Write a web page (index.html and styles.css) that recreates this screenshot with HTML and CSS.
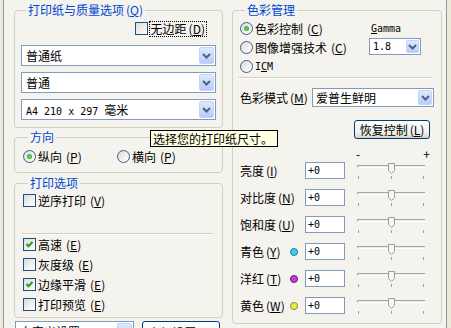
FILE: index.html
```html
<!DOCTYPE html>
<html lang="zh-CN">

<head>
    <meta charset="UTF-8">
    <meta name="viewport" content="width=device-width, initial-scale=1.0">
    <title>打印设置</title>
    <link rel="stylesheet" href="styles.css">
</head>

<body>
    <div class="tab">
        <div class="left">
            <div class="group paper">
                <div class="legend">打印纸与质量选项<span class="mn">(<u>Q</u>)</span></div>
                <div class="borderless">
                    <span class="check"><span class="box"></span><span class="focus">无边距<span class="mn">(<u>D</u>)</span></span></span>
                </div>
                <div class="combo"><span class="value">普通纸</span><span class="arrow"><svg width="9" height="6" viewBox="0 0 9 6"><path d="M1 1l3.5 3.5L8 1" fill="none" stroke="#4d6185" stroke-width="2"/></svg></span></div>
                <div class="combo"><span class="value">普通</span><span class="arrow"><svg width="9" height="6" viewBox="0 0 9 6"><path d="M1 1l3.5 3.5L8 1" fill="none" stroke="#4d6185" stroke-width="2"/></svg></span></div>
                <div class="combo"><span class="value"><span class="mono">A4 210 x 297 </span>毫米</span><span class="arrow"><svg width="9" height="6" viewBox="0 0 9 6"><path d="M1 1l3.5 3.5L8 1" fill="none" stroke="#4d6185" stroke-width="2"/></svg></span></div>
            </div>

            <div class="group orient">
                <div class="legend">方向</div>
                <div class="radios">
                    <span class="radio on portrait"><span class="dot"></span>纵向<span class="mn">(<u>P</u>)</span></span>
                    <span class="radio"><span class="dot"></span>横向<span class="mn">(<u>P</u>)</span></span>
                </div>
            </div>

            <div class="group options">
                <div class="legend">打印选项</div>
                <div class="check"><span class="box"></span>逆序打印<span class="mn">(<u>V</u>)</span></div>
                <div class="sep"></div>
                <div class="opt-list">
                    <div class="check on"><span class="box"><svg width="11" height="11" viewBox="0 0 11 11"><path d="M2.5 5l2 2.2 4-4.2" fill="none" stroke="#21a121" stroke-width="2"/></svg></span>高速<span class="mn">(<u>E</u>)</span></div>
                    <div class="check"><span class="box"></span>灰度级<span class="mn">(<u>E</u>)</span></div>
                    <div class="check on"><span class="box"><svg width="11" height="11" viewBox="0 0 11 11"><path d="M2.5 5l2 2.2 4-4.2" fill="none" stroke="#21a121" stroke-width="2"/></svg></span>边缘平滑<span class="mn">(<u>E</u>)</span></div>
                    <div class="check"><span class="box"></span>打印预览<span class="mn">(<u>E</u>)</span></div>
                </div>
            </div>

            <div class="bottom">
                <div class="combo preset"><span class="value">自定义设置</span><span class="arrow"><svg width="9" height="6" viewBox="0 0 9 6"><path d="M1 1l3.5 3.5L8 1" fill="none" stroke="#4d6185" stroke-width="2"/></svg></span></div>
                <button class="btn advanced">高级设置<span class="mn">(<u>A</u>)</span></button>
            </div>
        </div>

        <div class="right">
            <div class="group color">
                <div class="legend">色彩管理</div>
                <div class="cm-top">
                    <div class="cm-radios">
                        <span class="radio on"><span class="dot"></span>色彩控制<span class="mn">(<u>C</u>)</span></span>
                        <span class="radio"><span class="dot"></span>图像增强技术<span class="mn">(<u>C</u>)</span></span>
                        <span class="radio"><span class="dot"></span><span class="mono">I<u>C</u>M</span></span>
                    </div>
                    <div class="gamma">
                        <div class="gamma-label mono"><u>G</u>amma</div>
                        <div class="combo small"><span class="value mono">1.8</span><span class="arrow"><svg width="9" height="6" viewBox="0 0 9 6"><path d="M1 1l3.5 3.5L8 1" fill="none" stroke="#4d6185" stroke-width="2"/></svg></span></div>
                    </div>
                </div>
                <div class="sep cm-sep"></div>
                <div class="mode">
                    <span>色彩模式<span class="mn">(<u>M</u>)</span></span>
                    <div class="combo mode-combo"><span class="value">爱普生鲜明</span><span class="arrow"><svg width="9" height="6" viewBox="0 0 9 6"><path d="M1 1l3.5 3.5L8 1" fill="none" stroke="#4d6185" stroke-width="2"/></svg></span></div>
                </div>
                <button class="btn restore">恢复控制<span class="mn">(<u>L</u>)</span></button>
                <div class="scale"><span>-</span><span>+</span></div>
                <div class="adj-list">
                    <div class="adj">
                        <span class="name">亮度<span class="mn">(<u>I</u>)</span></span>
                        <span class="swatch"></span>
                        <span class="field mono">+0</span>
                        <div class="slider"><span class="track"></span><span class="ticks"><i></i><i></i><i></i></span><svg class="thumb" width="7" height="11" viewBox="0 0 7 11"><path d="M.5 .5h6v7l-3 3-3-3z" fill="#f6f6f2" stroke="#9c9c98"/></svg></div>
                    </div>
                    <div class="adj">
                        <span class="name">对比度<span class="mn">(<u>N</u>)</span></span>
                        <span class="swatch"></span>
                        <span class="field mono">+0</span>
                        <div class="slider"><span class="track"></span><span class="ticks"><i></i><i></i><i></i></span><svg class="thumb" width="7" height="11" viewBox="0 0 7 11"><path d="M.5 .5h6v7l-3 3-3-3z" fill="#f6f6f2" stroke="#9c9c98"/></svg></div>
                    </div>
                    <div class="adj">
                        <span class="name">饱和度<span class="mn">(<u>U</u>)</span></span>
                        <span class="swatch"></span>
                        <span class="field mono">+0</span>
                        <div class="slider"><span class="track"></span><span class="ticks"><i></i><i></i><i></i></span><svg class="thumb" width="7" height="11" viewBox="0 0 7 11"><path d="M.5 .5h6v7l-3 3-3-3z" fill="#f6f6f2" stroke="#9c9c98"/></svg></div>
                    </div>
                    <div class="adj">
                        <span class="name">青色<span class="mn">(<u>Y</u>)</span></span>
                        <span class="swatch cyan"></span>
                        <span class="field mono">+0</span>
                        <div class="slider"><span class="track"></span><span class="ticks"><i></i><i></i><i></i></span><svg class="thumb" width="7" height="11" viewBox="0 0 7 11"><path d="M.5 .5h6v7l-3 3-3-3z" fill="#f6f6f2" stroke="#9c9c98"/></svg></div>
                    </div>
                    <div class="adj">
                        <span class="name">洋红<span class="mn">(<u>T</u>)</span></span>
                        <span class="swatch magenta"></span>
                        <span class="field mono">+0</span>
                        <div class="slider"><span class="track"></span><span class="ticks"><i></i><i></i><i></i></span><svg class="thumb" width="7" height="11" viewBox="0 0 7 11"><path d="M.5 .5h6v7l-3 3-3-3z" fill="#f6f6f2" stroke="#9c9c98"/></svg></div>
                    </div>
                    <div class="adj">
                        <span class="name">黄色<span class="mn">(<u>W</u>)</span></span>
                        <span class="swatch yellow"></span>
                        <span class="field mono">+0</span>
                        <div class="slider"><span class="track"></span><span class="ticks"><i></i><i></i><i></i></span><svg class="thumb" width="7" height="11" viewBox="0 0 7 11"><path d="M.5 .5h6v7l-3 3-3-3z" fill="#f6f6f2" stroke="#9c9c98"/></svg></div>
                    </div>
                </div>
            </div>
        </div>

        <div class="tooltip">选择您的打印纸尺寸。</div>
    </div>
</body>

</html>
```

FILE: styles.css
```css
body {
    margin: 0;
    width: 451px;
    height: 328px;
    overflow: hidden;
    background-color: #ece9d8;
    font-family: "Noto Sans CJK SC", sans-serif;
    font-size: 12px;
    line-height: 14px;
    color: #000;
}

.tab {
    position: relative;
    display: flex;
    gap: 9px;
    margin-left: 3px;
    width: 444px;
    height: 328px;
    box-sizing: border-box;
    padding: 10px 0 0 10px;
    border-left: 1px solid #919b9c;
    border-right: 1px solid #919b9c;
    background-color: #f4f3ee;
}

.left {
    width: 209px;
    display: flex;
    flex-direction: column;
    flex-shrink: 0;
}

.right {
    width: 210px;
    flex-shrink: 0;
}

.mono {
    font-family: "DejaVu Sans Mono", monospace;
    font-size: 10px;
}

.mn {
    margin-left: 2px;
}

/* group boxes */
.group {
    border: 1px solid #d0d0bf;
    border-radius: 4px;
}

.legend {
    display: table;
    margin: -8px 0 0 5px;
    padding: 0 2px;
    background-color: #f4f3ee;
    color: #0046d5;
    line-height: 14px;
}

.sep {
    height: 0;
    border-top: 1px solid #d0d0bf;
    border-bottom: 1px solid #fff;
}

/* check boxes and radios */
.check,
.radio {
    display: flex;
    align-items: center;
    gap: 2px;
    height: 15px;
    white-space: nowrap;
}

.box {
    width: 13px;
    height: 13px;
    box-sizing: border-box;
    border: 1px solid #1c5180;
    background: linear-gradient(135deg, #dcdcd7, #fff);
    display: flex;
}

.dot {
    width: 13px;
    height: 13px;
    box-sizing: border-box;
    border: 1px solid #3c5c8c;
    border-radius: 50%;
    background: linear-gradient(135deg, #dcdcd7, #fff);
    display: flex;
    align-items: center;
    justify-content: center;
}

.radio.on .dot::after {
    content: "";
    width: 5px;
    height: 5px;
    border-radius: 50%;
    background: radial-gradient(#6fd36b, #2a9c27);
}

.focus {
    outline: 1px dotted #000;
    outline-offset: 0;
    padding: 0 1px;
}

/* combo boxes */
.combo {
    display: flex;
    align-items: stretch;
    height: 21px;
    box-sizing: border-box;
    padding: 1px;
    border: 1px solid #7f9db9;
    background-color: #fff;
}

.combo .value {
    flex: 1;
    padding-left: 3px;
    line-height: 17px;
    white-space: nowrap;
    overflow: hidden;
}

.arrow {
    width: 15px;
    box-sizing: border-box;
    display: flex;
    align-items: center;
    justify-content: center;
    border: 1px solid #c3d3fd;
    border-radius: 2px;
    background: linear-gradient(#dfe8fe, #b8cbf8);
}

/* buttons */
.btn {
    font: inherit;
    color: #000;
    padding: 0;
    border: 1px solid #003c74;
    border-radius: 3px;
    background: linear-gradient(#fff, #f1f0ea 70%, #d8d2c6);
}

/* left column */
.paper {
    padding: 0 6px 7px;
}

.borderless {
    display: flex;
    justify-content: flex-end;
    margin: 4px 0 9px;
    padding-right: 10px;
}

.paper .combo + .combo {
    margin-top: 6px;
}

.orient {
    margin-top: 9px;
    padding: 0 0 8px 8px;
}

.radios {
    display: flex;
    margin-top: 5px;
}

.radio.portrait {
    width: 94px;
}

.options {
    margin-top: 10px;
    padding: 0 0 5px 8px;
}

.options > .check {
    margin-top: 3px;
}

.options .sep {
    margin: 25px 9px 0 -1px;
}

.opt-list {
    display: flex;
    flex-direction: column;
    gap: 5px;
    margin-top: 2px;
}

.bottom {
    display: flex;
    margin-top: 3px;
}

.preset {
    width: 119px;
    margin-left: 1px;
}

.preset .value {
    padding-left: 3px;
}

.advanced {
    width: 78px;
    height: 23px;
    margin-left: 8px;
}

/* right column */
.color {
    padding: 0 0 9px 7px;
}

.cm-top {
    display: flex;
}

.cm-radios {
    display: flex;
    flex-direction: column;
    gap: 4px;
    margin-top: 4px;
}

.gamma {
    width: 52px;
    margin: 5px 20px 0 auto;
}

.gamma-label {
    padding-left: 2px;
    line-height: 14px;
}

.combo.small {
    height: 17px;
    margin-top: 2px;
}

.combo.small .value {
    padding-left: 2px;
    line-height: 13px;
}

.combo.small .arrow {
    width: 13px;
}

.cm-sep {
    margin: 3px 8px 0 -2px;
}

.mode {
    display: flex;
    align-items: center;
    margin-top: 9px;
}

.mode-combo {
    width: 122px;
    height: 19px;
    margin: 0 7px 0 auto;
}

.mode-combo .value {
    padding-left: 2px;
    line-height: 15px;
}

.mode-combo .arrow {
    width: 14px;
}

.restore {
    display: block;
    width: 76px;
    height: 19px;
    margin: 13px 11px 0 auto;
}

.scale {
    display: flex;
    justify-content: space-between;
    width: 74px;
    margin: 8px 0 0 116px;
}

.adj-list {
    display: flex;
    flex-direction: column;
    gap: 10px;
    margin-top: 1px;
}

.adj {
    display: flex;
    align-items: center;
    height: 17px;
}

.adj .name {
    width: 50px;
    white-space: nowrap;
}

.swatch {
    width: 8px;
    height: 8px;
    margin-right: 7px;
    box-sizing: border-box;
    border-radius: 50%;
}

.swatch.cyan {
    border: 1px solid #1b7f9c;
    background-color: #3fd0f0;
}

.swatch.magenta {
    border: 1px solid #6e1a86;
    background-color: #c93ad8;
}

.swatch.yellow {
    border: 1px solid #8c8a1c;
    background-color: #eeee4a;
}

.field {
    width: 40px;
    height: 17px;
    box-sizing: border-box;
    padding-left: 2px;
    border: 1px solid #7f9db9;
    background-color: #fff;
    line-height: 15px;
}

.slider {
    position: relative;
    width: 72px;
    height: 17px;
    margin-left: 10px;
}

.track {
    position: absolute;
    left: 2px;
    right: 2px;
    top: 3px;
    height: 1px;
    border-top: 1px solid #a6a6a0;
    border-left: 1px solid #a6a6a0;
    border-bottom: 1px solid #fff;
    background-color: #ecebe6;
}

.ticks {
    position: absolute;
    left: 3px;
    right: 3px;
    top: 14px;
    display: flex;
    justify-content: space-between;
}

.ticks i {
    width: 1px;
    height: 3px;
    background-color: #a0a0a0;
}

.thumb {
    position: absolute;
    left: 33px;
    top: 1px;
}

/* tooltip over the dialog */
.tooltip {
    position: absolute;
    left: 146px;
    top: 130px;
    padding: 0 4px 0 2px;
    border: 1px solid #000;
    background-color: #ffffe1;
    line-height: 15px;
    white-space: nowrap;
}
```
